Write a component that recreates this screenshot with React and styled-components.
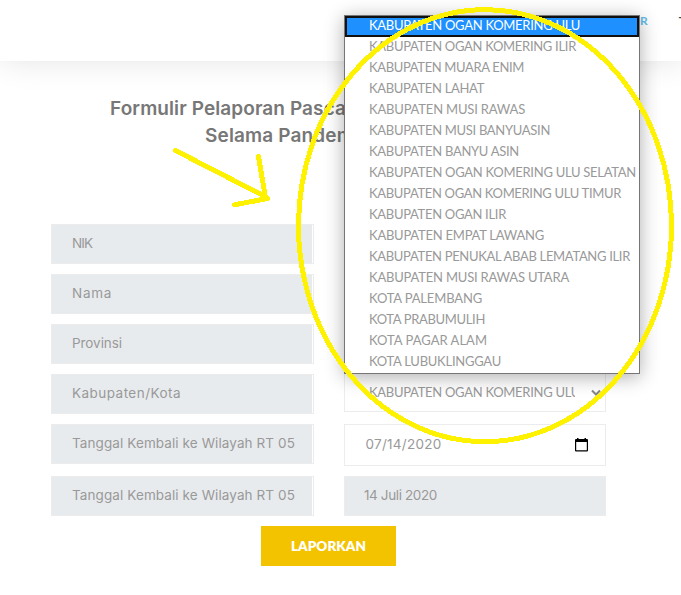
import React, { useLayoutEffect, useRef, useState } from "react";
import styled, { createGlobalStyle } from "styled-components";

const GlobalStyle = createGlobalStyle`
  * { box-sizing: border-box; }
  html, body { margin: 0; overflow: hidden; background: #fff; }
  body { font-family: Lato, "Open Sans", sans-serif; font-size: 13px; color: #999; }
`;

const Page = styled.div`
  position: relative;
  width: 681px;
  height: 595px;
  overflow: hidden;
  background: #fff;
`;

const Header = styled.header`
  display: flex;
  justify-content: flex-end;
  gap: 31px;
  height: 61px;
  padding-top: 13px;
  margin-right: -5px;
  box-shadow: 0 0 32px rgba(0, 0, 0, 0.11);
`;

const NavLink = styled.a`
  font: 700 12px/16px Lato, sans-serif;
  color: ${(p) => (p.$active ? "#62bdea" : "#444")};
`;

const Title = styled.h1`
  display: flex;
  flex-direction: column;
  margin: 0;
  padding-top: 34px;
  font: 600 19px/27px Inter, sans-serif;
  color: #777;
`;

const TitleLine = styled.span`
  padding-left: ${(p) => p.$indent}px;
`;

const Form = styled.form`
  display: grid;
  grid-template-columns: 263px 262px;
  column-gap: 30px;
  padding: 75px 0 0 51px;
`;

const Column = styled.div`
  display: flex;
  flex-direction: column;
  gap: 10px;
`;

const Label = styled.div`
  display: flex;
  align-items: center;
  height: 40px;
  margin-top: ${(p) => p.$offset || 0}px;
  padding: 0 0 2px 20px;
  border: 1px solid #ececec;
  background: linear-gradient(#e8ebee, #e8ebee) 0 0 / 260px 100% no-repeat #fff;
  font: 13.5px/20px Inter, sans-serif;
`;

const Control = styled(Label)`
  justify-content: space-between;
  height: ${(p) => p.$height || 40}px;
  padding-left: ${(p) => p.$inset}px;
  padding-right: ${(p) => p.$end || 0}px;
  background: ${(p) => (p.$disabled ? "#e8ebee" : "#fff")};
`;

const SelectValue = styled.span`
  width: 206px;
  margin-top: 2px;
  overflow: hidden;
  white-space: nowrap;
  font: 13px/20px Lato, sans-serif;
`;

const Chevron = styled.svg`
  margin-top: 4px;
`;

const Submit = styled.button`
  display: flex;
  align-items: center;
  justify-content: center;
  width: 135px;
  height: 40px;
  margin: 10px 0 0 261px;
  padding: 0;
  border: 0;
  background: #f4c300;
  color: #fff;
  font: 800 13.5px/20px Lato, sans-serif;
`;

const Options = styled.ul`
  position: absolute;
  left: 344px;
  top: 15px;
  width: 296px;
  margin: 0;
  padding: 0;
  list-style: none;
  border: 1px solid #767676;
  background: #fff;
  box-shadow: 0 3px 18px rgba(0, 0, 0, 0.32);
`;

const Option = styled.li`
  display: flex;
  align-items: center;
  height: 21px;
  padding: 0 0 ${(p) => (p.$selected ? 3 : 4)}px ${(p) => (p.$selected ? 22 : 24)}px;
  border: ${(p) => (p.$selected ? "2px solid #101010" : "0")};
  background: ${(p) => (p.$selected ? "#1e90ff" : "#fff")};
  color: ${(p) => (p.$selected ? "#fff" : "#999")};
  line-height: 20px;
`;

const Marks = styled.svg`
  position: absolute;
  inset: 0;
  pointer-events: none;
`;

const Run = styled.span`
  display: inline-block;
  white-space: nowrap;
`;

/* Tracks a run of text so that it fills the given width. */
function Fit({ width, children }) {
  const ref = useRef(null);
  const [spacing, setSpacing] = useState(0);
  useLayoutEffect(() => {
    const natural = ref.current.getBoundingClientRect().width;
    setSpacing((width - natural) / children.length);
  }, [width, children]);
  return (
    <Run ref={ref} style={{ letterSpacing: spacing }}>
      {children}
    </Run>
  );
}

const labels = [
  ["NIK", 20],
  ["Nama", 40],
  ["Provinsi", 50],
  ["Kabupaten/Kota", 109],
  ["Tanggal Kembali ke Wilayah RT 05", 223],
  ["Tanggal Kembali ke Wilayah RT 05", 223, 2],
];

const regions = [
  ["KABUPATEN OGAN KOMERING ULU", 211],
  ["KABUPATEN OGAN KOMERING ILIR", 207],
  ["KABUPATEN MUARA ENIM", 155],
  ["KABUPATEN LAHAT", 115],
  ["KABUPATEN MUSI RAWAS", 156],
  ["KABUPATEN MUSI BANYUASIN", 181],
  ["KABUPATEN BANYU ASIN", 150],
  ["KABUPATEN OGAN KOMERING ULU SELATAN", 267],
  ["KABUPATEN OGAN KOMERING ULU TIMUR", 252],
  ["KABUPATEN OGAN ILIR", 137],
  ["KABUPATEN EMPAT LAWANG", 175],
  ["KABUPATEN PENUKAL ABAB LEMATANG ILIR", 261],
  ["KABUPATEN MUSI RAWAS UTARA", 200],
  ["KOTA PALEMBANG", 113],
  ["KOTA PRABUMULIH", 116],
  ["KOTA PAGAR ALAM", 118],
  ["KOTA LUBUKLINGGAU", 132],
];

export default function App() {
  return (
    <Page>
      <GlobalStyle />
      <Header>
        <NavLink $active>OR</NavLink>
        <NavLink>T</NavLink>
      </Header>
      <Title>
        <TitleLine $indent={110}><Fit width={236}>Formulir Pelaporan Pasca</Fit></TitleLine>
        <TitleLine $indent={205}><Fit width={149}>Selama Pandem</Fit></TitleLine>
      </Title>
      <Form>
        <Column>
          {labels.map(([text, width, offset], i) => (
            <Label key={i} $offset={offset}><Fit width={width}>{text}</Fit></Label>
          ))}
        </Column>
        <Column>
          <Control $offset={148} $inset={24} $end={4}>
            <SelectValue><Fit width={211}>{regions[0][0]}</Fit></SelectValue>
            <Chevron width="10" height="8" viewBox="0 0 10 8" fill="none" stroke="#858585" strokeWidth="2">
              <path d="M1 1.5 5 5.5 9 1.5" />
            </Chevron>
          </Control>
          <Control $offset={2} $height={42} $inset={20.5} $end={17}>
            <Fit width={76}>07/14/2020</Fit>
            <svg width="13" height="15" viewBox="0 0 13 15">
              <path fill="#000" fillRule="evenodd" d="M2 1h1.5v1h6V1H11v1h1q1 0 1 1v10.500q0 1-1 1H1q-1 0-1-1V3q0-1 1-1h1zM1.200 5v8.300h10.600V5z" />
            </svg>
          </Control>
          <Control $disabled $inset={19}><Fit width={73}>14 Juli 2020</Fit></Control>
        </Column>
      </Form>
      <Submit type="button"><Fit width={75}>LAPORKAN</Fit></Submit>
      <Options>
        {regions.map(([text, width], i) => (
          <Option key={text} $selected={i === 0}><Fit width={width}>{text}</Fit></Option>
        ))}
      </Options>
      <Marks width="681" height="595" fill="none" stroke="#fff200" strokeWidth="5" strokeLinecap="round" strokeLinejoin="round" shapeRendering="crispEdges">
        <ellipse cx="485" cy="225.7" rx="186.5" ry="216" />
        <path d="M175.500 150.500 265 196.500M258.500 156.500 265.500 198M234.500 204.800 267.500 198.500" />
      </Marks>
    </Page>
  );
}
